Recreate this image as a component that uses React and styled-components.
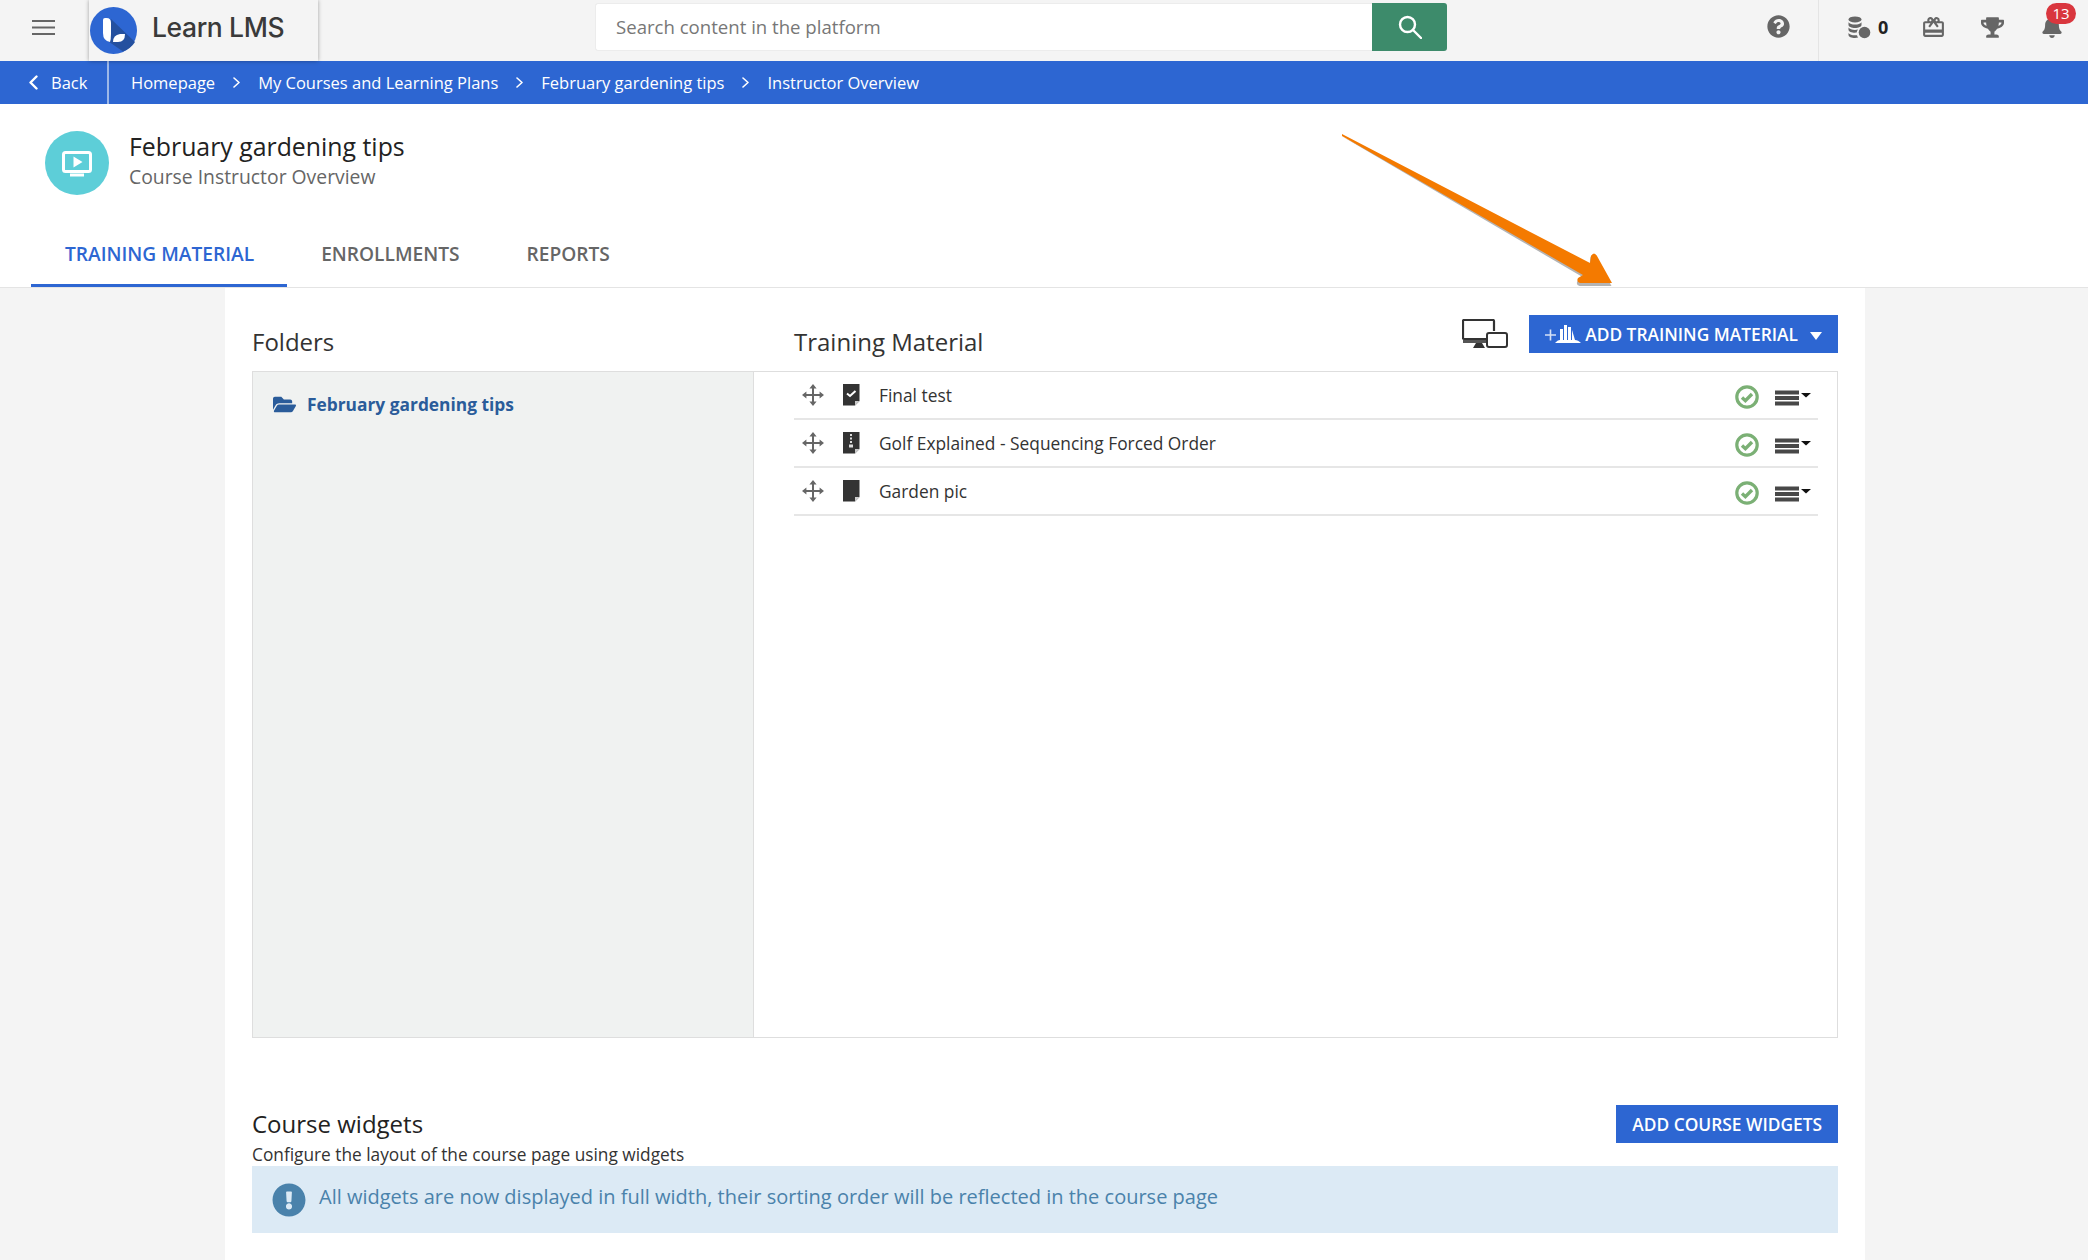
import React from "react";
import styled, { createGlobalStyle } from "styled-components";
import { FaQuestionCircle, FaBell, FaTrophy, FaFolderOpen, FaExclamationCircle } from "react-icons/fa";
import { MdOutlineRedeem } from "react-icons/md";

const Global = createGlobalStyle`
  html, body { margin: 0; padding: 0; background: #f4f4f4; }
  body { width: 2088px; height: 1260px; overflow: hidden; font-family: "Open Sans", "Noto Sans", sans-serif; color: #333; }
  * { box-sizing: border-box; }
`;

const Page = styled.div`position: relative; width: 2088px; height: 1260px; overflow: hidden;`;

const TopBar = styled.header`display: flex; align-items: stretch; height: 61px; background: #f4f4f4;`;
const Burger = styled.div`width: 89px; padding: 0 0 6px 32px; display: flex; align-items: center; color: #666;`;
const LogoBox = styled.div`
  position: relative; z-index: 2; width: 229px; height: 61px; display: flex; align-items: center; gap: 15px; padding: 0 0 8px 1px;
  background: #f4f4f4; box-shadow: 0 0 4px rgba(0,0,0,.35);
`;
const LogoText = styled.span`font-family: Inter, sans-serif; font-weight: 500; font-size: 26.5px; letter-spacing: -0.4px; color: #3a3a3a;`;
const SearchArea = styled.div`width: 1129px; padding: 3px 0 10px 277px; display: flex;`;
const SearchField = styled.div`
  width: 777px; height: 48px; background: #fff; border: 1px solid #ececec; border-right: 0; border-radius: 3px 0 0 3px;
  padding: 0 0 2px 20px; display: flex; align-items: center; font-size: 18.6px; color: #777;
`;
const SearchBtn = styled.div`
  width: 75px; height: 48px; background: #3d8b6b; border-radius: 0 3px 3px 0; display: flex; align-items: center; justify-content: center;
`;
const HelpArea = styled.div`width: 372px; padding: 0 0 8px 320px; display: flex; align-items: center; border-right: 1px solid #e4e4e4; color: #666;`;
const TopIcons = styled.div`position: relative; flex: 1; color: #666;`;
const IconRow = styled.div`display: flex; align-items: center; height: 54px; padding-left: 29px;`;
const Coins = styled.span`display: flex; align-items: center; gap: 7px; width: 73px; color: #666;`;
const CoinCount = styled.b`font-size: 18px; color: #222; font-weight: 700;`;
const Slot = styled.span`display: flex; width: ${p => p.$w}px; color: #666;`;
const Badge = styled.span`
  position: absolute; left: 227px; top: 3px; width: 30px; height: 21px; border-radius: 11px; background: #d9363e; color: #fff;
  font-size: 15px; line-height: 21px; text-align: center;
`;

const Crumbs = styled.nav`display: flex; align-items: center; height: 43px; background: #2d66d2; color: #fff; font-size: 16.5px; font-weight: 500;`;
const BackLink = styled.a`display: flex; align-items: center; gap: 13px; width: 109px; height: 43px; padding-left: 29px; border-right: 2px solid #9db8e8;`;
const CrumbList = styled.div`display: flex; align-items: center; padding-left: 22px;`;
const Crumb = styled.span`white-space: nowrap;`;
const Sep = styled.span`display: flex; width: 43px; justify-content: center;`;

const Header = styled.div`height: 184px; background: #fff; border-bottom: 1px solid #e4e4e4;`;
const CourseInfo = styled.div`display: flex; gap: 20px; padding: 27px 0 0 45px; height: 128px;`;
const CourseIcon = styled.div`width: 64px; height: 64px; border-radius: 50%; background: #5dced8; display: flex; align-items: center; justify-content: center;`;
const CourseTitle = styled.h1`margin: 0; font-size: 24.85px; font-weight: 500; line-height: 30px; color: #222;`;
const CourseSub = styled.p`margin: 3px 0 0; font-size: 19.35px; line-height: 26px; color: #666;`;
const Tabs = styled.div`display: flex; padding-left: 31px;`;
const Tab = styled.div`
  height: 55px; padding: 0 33px 0 34px; font-size: 19.15px; font-weight: 600; line-height: 44px; white-space: nowrap;
  color: ${p => p.$active ? "#2d66d2" : "#666"};
  border-bottom: 3px solid ${p => p.$active ? "#2d66d2" : "transparent"};
`;

const Panel = styled.main`width: 1640px; height: 972px; margin-left: 225px; padding: 0 27px; background: #fff;`;
const SectionHead = styled.div`display: flex; height: 83px; padding-top: 27px;`;
const HeadTitle = styled.h2`
  margin: 11px 0 0; width: ${p => p.$w ? p.$w + "px" : "auto"}; flex: ${p => p.$w ? "none" : 1};
  font-size: 24px; font-weight: 400; line-height: 32px; color: #333;
`;
const Devices = styled.span`display: flex; margin: 4px 21px 0 0;`;
const PrimaryBtn = styled.button`
  display: flex; align-items: center; height: 38px; border: 0; border-radius: 0; padding: 0 ${p => p.$pr}px 0 ${p => p.$pl}px;
  background: #2d66d2; color: #fff; font: 600 17.35px "Open Sans", sans-serif; white-space: nowrap;
`;
const Caret = styled.span`margin-left: 12px; width: 0; height: 0; border-left: 6px solid transparent; border-right: 6px solid transparent; border-top: 8px solid #fff; margin-top: 4px;`;

const Box = styled.div`display: flex; height: 667px; border: 1px solid #dedede;`;
const FolderCol = styled.aside`width: 501px; background: #f0f2f1; border-right: 1px solid #dedede; padding: 20px 0 0 20px;`;
const FolderItem = styled.div`display: flex; align-items: center; gap: 11px; font-size: 17.35px; font-weight: 700; line-height: 24px; color: #2a5c9a;`;
const MaterialCol = styled.div`flex: 1; padding: 0 19px 0 40px;`;
const Row = styled.div`display: flex; align-items: center; height: 48px; padding: 0 7px 0 8px; border-bottom: 2px solid #e6e6e6; font-size: 17.35px; color: #333;`;
const RowName = styled.span`flex: 1; margin-left: 19px;`;
const DocWrap = styled.span`display: flex; margin-left: 19px;`;
const StatusWrap = styled.span`display: flex; margin-top: 3px;`;
const MenuIcon = styled.span`display: flex; margin: 6px 0 0 16px;`;

const Widgets = styled.section`margin-top: 67px;`;
const WidgetHead = styled.div`display: flex; justify-content: space-between; height: 38px;`;
const WidgetTitle = styled.h2`margin: 0; font-size: 24px; font-weight: 400; line-height: 38px; color: #222;`;
const WidgetSub = styled.p`margin: 0; font-size: 17.3px; line-height: 23px; color: #333;`;
const Notice = styled.div`
  display: flex; align-items: center; gap: 13px; height: 67px; padding-left: 20px; background: #dceaf5; color: #4a82ab; font-size: 20px;
`;
const NoticeIcon = styled.span`display: flex; color: #4a82ab;`;
const NoticeText = styled.span`margin-bottom: 6px;`;
const ArrowLayer = styled.svg`position: absolute; left: 1330px; top: 125px; pointer-events: none; z-index: 3;`;

const Hamburger = () => (
  <svg width="23" height="15" viewBox="0 0 23 15"><path d="M0 1h23M0 7.5h23M0 14h23" stroke="currentColor" strokeWidth="2.2" /></svg>
);
const Logo = () => (
  <svg width="47" height="47" viewBox="0 0 47 47" style={{ marginTop: 8 }}>
    <circle cx="23.5" cy="23.5" r="23.5" fill="#2d66d2" />
    <path d="M21 12 L45 35 A23.5 23.5 0 0 1 33 44.5 L15 32Z" fill="#24509f" />
    <path d="M13 13 q0-2 2-2 h1.500 q4.500 0 4.500 5 v11 q0 5 -1 8 q-7-1-7-9Z" fill="#fff" />
    <path d="M23 35 q0-7 7-8 h5 q0 8-7 8Z" fill="#fff" />
  </svg>
);
const SearchIcon = () => (
  <svg width="24" height="24" viewBox="0 0 24 24" fill="none" stroke="#fff" strokeWidth="2.4" strokeLinecap="round"><circle cx="9.5" cy="9.5" r="7.5" /><path d="M15 15l8 8" /></svg>
);
const CoinsIcon = () => (
  <svg width="23" height="23" viewBox="0 0 23 23" fill="currentColor">
    <ellipse cx="7" cy="3.4" rx="6.5" ry="3" />
    <path d="M.5 6.2c1 1.6 3.6 2.3 6.5 2.3s5.5-.7 6.5-2.3V9c0 1.6-3 3-6.5 3S.5 10.6.5 9zM.5 11.6c1 1.6 3.6 2.3 6.5 2.3 1 0 2-.1 3-.3-.8.9-1.2 1.9-1.3 3-.5 0-1.1.1-1.7.1-3.5 0-6.5-1.3-6.5-3zM.5 17c1 1.6 3.6 2.3 6.5 2.3l2 0c.2.8.6 1.6 1.2 2.2-1 .3-2.1.5-3.2.5-3.5 0-6.5-1.3-6.5-3z" />
    <circle cx="16.5" cy="16.5" r="5.8" />
  </svg>
);
const ChevLeft = () => (
  <svg width="9" height="15" viewBox="0 0 9 15" fill="none" stroke="#fff" strokeWidth="2.4" strokeLinecap="round" strokeLinejoin="round"><path d="M7.5 1.5 1.5 7.5l6 6" /></svg>
);
const ChevRight = () => (
  <svg width="7" height="11" viewBox="0 0 7 11" fill="none" stroke="#fff" strokeWidth="1.6" strokeLinecap="round" strokeLinejoin="round"><path d="M1 1l5 4.5L1 10" /></svg>
);
const ScreenPlay = () => (
  <svg width="30" height="26" viewBox="0 0 30 26" fill="none" style={{ marginTop: 2 }}>
    <rect x="1.5" y="1.5" width="27" height="19" rx="2" stroke="#fff" strokeWidth="3" />
    <path d="M11.5 5.5v11l9-5.5z" fill="#fff" />
    <rect x="8" y="22.5" width="14" height="3" fill="#fff" />
  </svg>
);
const DevicesIcon = () => (
  <svg width="46" height="30" viewBox="0 0 46 30" fill="none">
    <path d="M30 20H2a1 1 0 0 1-1-1V2a1 1 0 0 1 1-1h29a1 1 0 0 1 1 1v10" stroke="#333" strokeWidth="2.2" />
    <path d="M1 21h29v3H1z" fill="#555" />
    <path d="M14 24h6l3 5H11z" fill="#333" />
    <rect x="25" y="14" width="20" height="14" rx="2" stroke="#333" strokeWidth="2" fill="#fff" />
  </svg>
);
const AddIcon = () => (
  <svg width="36" height="22" viewBox="0 0 36 22" fill="none" style={{ marginRight: 4 }}>
    <path d="M0 12h11M5.5 6.5v11" stroke="#fff" strokeWidth="1.6" opacity=".8" />
    <path d="M15 6h3v11h-3zM19 2h3v15h-3zM23 4h3v13h-3z" fill="#fff" />
    <path d="M27 7l3 10h-3z" fill="#fff" />
    <path d="M10 20c2-2 3-3 5-3h15c2 0 4 1 6 3z" fill="#fff" />
  </svg>
);
const MoveIcon = () => (
  <svg width="22" height="22" viewBox="0 0 22 22" fill="#666" stroke="none">
    <path d="M10 3h2v16h-2zM3 10h16v2H3z" />
    <path d="M11 0l3.6 4.4H7.4zM11 22l-3.6-4.4h7.2zM0 11l4.4-3.6v7.2zM22 11l-4.4 3.6V7.400z" />
  </svg>
);
const DocIcon = ({ kind }) => (
  <svg width="17" height="22" viewBox="0 0 17 22">
    <path d="M0 0h16.500v17L12 21.500H0z" fill="#333" />
    <path d="M12 21.500V17h4.500z" fill="#ccc" />
    {kind === "test" && <path d="M4 9.500l3 2.500 5.500-5" fill="none" stroke="#fff" strokeWidth="2" />}
    {kind === "zip" && <path d="M7 2h2v2H7zM7 5.500h2v2H7zM7 9h2v2H7zM6 12.500h4v3H6z" fill="#ddd" />}
  </svg>
);
const StatusIcon = () => (
  <svg width="24" height="24" viewBox="0 0 24 24" fill="none">
    <circle cx="12" cy="12" r="10.200" stroke="#7bb075" strokeWidth="3.200" />
    <path d="M7 12.500l3.400 3.200L17 9" stroke="#7bb075" strokeWidth="3.400" />
  </svg>
);
const RowMenu = () => (
  <svg width="36" height="16" viewBox="0 0 36 16">
    <path d="M0 .5h24v4H0zM0 6h24v4H0zM0 11.500h24v4H0z" fill="#484848" />
    <path d="M26 3h10l-5 4.500z" fill="#111" />
  </svg>
);

const rows = [
  { name: "Final test", kind: "test" },
  { name: "Golf Explained - Sequencing Forced Order", kind: "zip" },
  { name: "Garden pic", kind: "image" },
];
const crumbs = ["Homepage", "My Courses and Learning Plans", "February gardening tips", "Instructor Overview"];

export default function App() {
  return (
    <Page>
      <Global />
      <TopBar>
        <Burger><Hamburger /></Burger>
        <LogoBox><Logo /><LogoText>Learn LMS</LogoText></LogoBox>
        <SearchArea>
          <SearchField>Search content in the platform</SearchField>
          <SearchBtn><SearchIcon /></SearchBtn>
        </SearchArea>
        <HelpArea><FaQuestionCircle size={23} /></HelpArea>
        <TopIcons>
          <IconRow>
            <Coins><CoinsIcon /><CoinCount>0</CoinCount></Coins>
            <Slot $w={60}><MdOutlineRedeem size={25} /></Slot>
            <Slot $w={60}><FaTrophy size={23} /></Slot>
            <Slot $w={24}><FaBell size={22} /></Slot>
          </IconRow>
          <Badge>13</Badge>
        </TopIcons>
      </TopBar>
      <Crumbs>
        <BackLink><ChevLeft />Back</BackLink>
        <CrumbList>
          {crumbs.map((c, i) => (
            <React.Fragment key={c}>
              {i > 0 && <Sep><ChevRight /></Sep>}
              <Crumb>{c}</Crumb>
            </React.Fragment>
          ))}
        </CrumbList>
      </Crumbs>
      <Header>
        <CourseInfo>
          <CourseIcon><ScreenPlay /></CourseIcon>
          <div>
            <CourseTitle>February gardening tips</CourseTitle>
            <CourseSub>Course Instructor Overview</CourseSub>
          </div>
        </CourseInfo>
        <Tabs>
          <Tab $active>TRAINING MATERIAL</Tab>
          <Tab>ENROLLMENTS</Tab>
          <Tab>REPORTS</Tab>
        </Tabs>
      </Header>
      <Panel>
        <SectionHead>
          <HeadTitle $w={542}>Folders</HeadTitle>
          <HeadTitle>Training Material</HeadTitle>
          <Devices><DevicesIcon /></Devices>
          <PrimaryBtn $pl={16} $pr={16}><AddIcon />ADD TRAINING MATERIAL<Caret /></PrimaryBtn>
        </SectionHead>
        <Box>
          <FolderCol>
            <FolderItem><FaFolderOpen size={23} color="#2a5c9a" />February gardening tips</FolderItem>
          </FolderCol>
          <MaterialCol>
            {rows.map(r => (
              <Row key={r.name}>
                <MoveIcon />
                <DocWrap><DocIcon kind={r.kind} /></DocWrap>
                <RowName>{r.name}</RowName>
                <StatusWrap><StatusIcon /></StatusWrap>
                <MenuIcon><RowMenu /></MenuIcon>
              </Row>
            ))}
          </MaterialCol>
        </Box>
        <Widgets>
          <WidgetHead>
            <WidgetTitle>Course widgets</WidgetTitle>
            <PrimaryBtn $pl={16} $pr={16}>ADD COURSE WIDGETS</PrimaryBtn>
          </WidgetHead>
          <WidgetSub>Configure the layout of the course page using widgets</WidgetSub>
          <Notice>
            <NoticeIcon><FaExclamationCircle size={34} /></NoticeIcon>
            <NoticeText>All widgets are now displayed in full width, their sorting order will be reflected in the course page</NoticeText>
          </Notice>
        </Widgets>
      </Panel>
      <ArrowLayer width="300" height="170" viewBox="1330 125 300 170">
        <path d="M1342 135 L1590 264 L1591 256 Q1594 251 1597 256 L1612 285 L1580 285 Q1576 284 1578 280 L1583 276 Z" fill="#777" transform="translate(-0.5 1)" opacity=".55" />
        <path d="M1342 134 L1590 263 L1591 256 Q1594 251 1597 256 L1612 283 L1580 283 Q1576 282 1578 278 L1583 275 L1342 136 Z" fill="#f47a00" />
      </ArrowLayer>
    </Page>
  );
}
